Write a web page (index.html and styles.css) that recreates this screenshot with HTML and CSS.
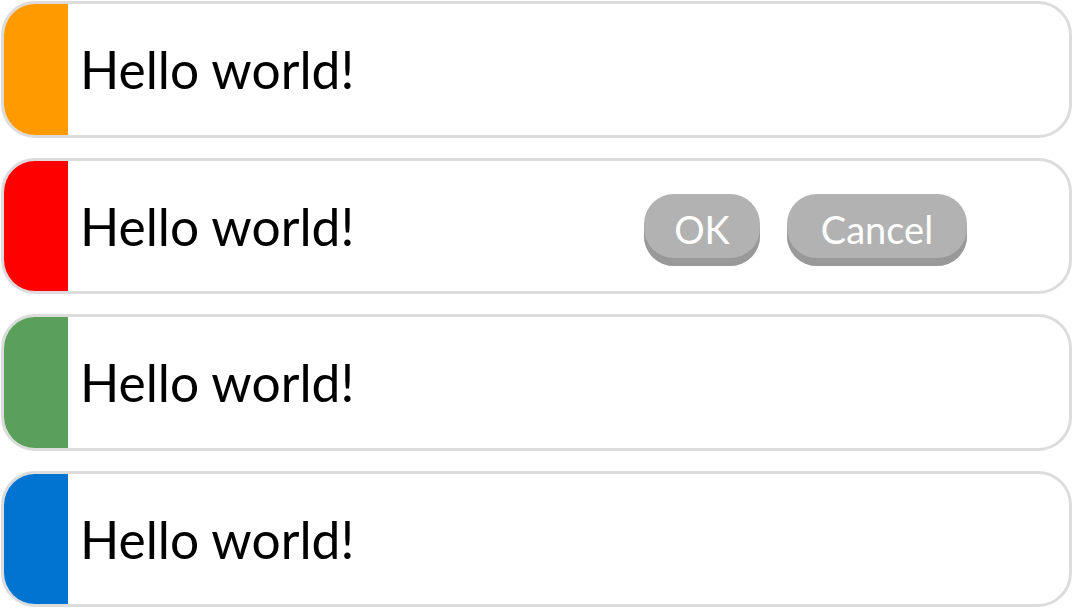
FILE: index.html
```html
<!DOCTYPE html>
<html>
<head>
<meta charset="utf-8">
<link rel="stylesheet" href="styles.css">
</head>
<body>
<div class="list">
  <div class="card"><div class="stripe orange"></div><div class="msg">Hello world!</div></div>
  <div class="card"><div class="stripe red"></div><div class="msg">Hello world!</div>
    <div class="actions"><button class="btn ok">OK</button><button class="btn cancel">Cancel</button></div></div>
  <div class="card"><div class="stripe green"></div><div class="msg">Hello world!</div></div>
  <div class="card"><div class="stripe blue"></div><div class="msg">Hello world!</div></div>
</div>
</body>
</html>
```
FILE: styles.css
```css
html, body { margin: 0; padding: 0; background: #fff; }
body { font-family: "Lato", "Noto Sans", sans-serif; }
.list { display: flex; flex-direction: column; gap: 20px; padding: 1px 1px 0 1px; }
.card {
  display: flex; align-items: center;
  height: 136.5px; box-sizing: border-box;
  border: 3px solid #dcdcdc; border-radius: 34px; overflow: hidden;
  background: #fff;
}
.stripe { width: 64px; align-self: stretch; flex: none; }
.orange { background: #ff9b00; }
.red { background: #ff0000; }
.green { background: #5aa05a; }
.blue { background: #0074d0; }
.msg { padding-left: 12px; font-size: 51.5px; color: #000; flex: 1; }
.actions { display: flex; gap: 27px; margin-right: 102px; align-self: flex-start; margin-top: 33px; }
.btn {
  height: 72px; border: none; border-radius: 30px;
  background: #b2b2b2; color: #fff;
  font-family: inherit; font-size: 38px;
  box-shadow: inset 0 -8px 0 #999999;
  padding: 0 0 2px 0; line-height: 68px;
}
.ok { width: 116px; }
.cancel { width: 180px; }
```
